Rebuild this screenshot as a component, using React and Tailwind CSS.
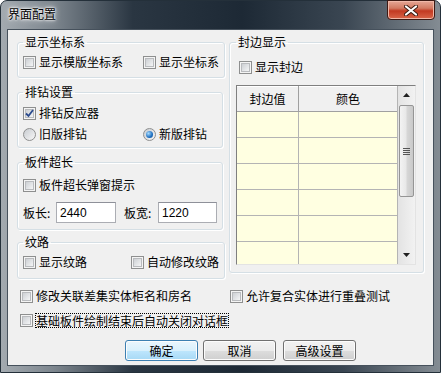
import React from 'react';

const Check = ({ checked }) => (
  <span className="w-[13px] h-[13px] shrink-0 border border-[#8e8f8f] bg-[#f4f4f4] p-px flex">
    <span className="flex-1 flex items-center justify-center bg-[linear-gradient(135deg,#cdd0d4,#f4f5f6)] border border-[#b9bbbe]">
      {checked && (
        <svg width="9" height="9" viewBox="0 0 9 9" className="-m-px">
          <path d="M1 4.5 L3.5 7 L8 1" fill="none" stroke="#2b4b8e" strokeWidth="1.8" />
        </svg>
      )}
    </span>
  </span>
);

const Radio = ({ checked }) => (
  <span className="w-[13px] h-[13px] shrink-0 rounded-full border border-[#8e8f8f] bg-[linear-gradient(135deg,#c8ccd1,#f7f7f7)] flex items-center justify-center">
    {checked && (
      <span className="w-[7px] h-[7px] rounded-full bg-[radial-gradient(circle_at_35%_35%,#a8dcff,#1e6fc0_60%,#0d4a90)]" />
    )}
  </span>
);

const Row = ({ children, className = '' }) => (
  <div className={`h-[14px] flex items-center gap-[3px] whitespace-nowrap ${className}`}>{children}</div>
);

const Group = ({ title, className = '', children }) => (
  <fieldset className={`border border-[#d5dfe5] rounded-[3px] shadow-[inset_1px_1px_0_#fff,1px_1px_0_#fff] ${className}`}>
    <legend className="px-[2px] leading-[14px]">{title}</legend>
    {children}
  </fieldset>
);

const Button = ({ children, primary }) => (
  <button
    className={`w-[73px] h-[21px] rounded-[3px] border leading-[17px] shadow-[inset_0_0_0_1px_#fcfcfc] ${
      primary
        ? 'border-[#3c7fb1] bg-[linear-gradient(#eaf6fd,#d9f0fc_50%,#bee6fd_51%,#a7d9f5)]'
        : 'border-[#707070] bg-[linear-gradient(#f2f2f2,#ebebeb_50%,#dddddd_51%,#cfcfcf)]'
    }`}
  >
    {children}
  </button>
);

const rows = [0, 1, 2, 3, 4, 5];

export default function App() {
  return (
    <div className="w-[441px] h-[373px] overflow-hidden bg-white font-['Noto_Sans_CJK_SC',sans-serif] text-[12px] text-black">
      <div className="w-full h-full rounded-t-[7px] border border-[#24303a] bg-[linear-gradient(90deg,#a3aab0_0%,#7d868e_12%,#2a3642_30%,#1d2935_55%,#3a4652_78%,#848c93_100%)] flex flex-col">
        {/* title bar */}
        <div className="h-[28px] flex items-start">
          <span className="ml-[7px] mt-[6px] leading-[14px] [text-shadow:0_0_6px_#fff,0_0_3px_#fff,0_0_2px_#fff]">界面配置</span>
          <div className="ml-auto mr-[5px] -mt-px w-[48px] h-[20px] rounded-b-[4px] border border-[#3d1a14] bg-[linear-gradient(#e6a796,#d27a62_40%,#c23a22_55%,#d9664a)] shadow-[inset_0_0_0_1px_#f0b8a8] flex items-center justify-center">
            <svg width="14" height="11" viewBox="0 0 14 11">
              <path d="M2 1.5 L12 9.5 M12 1.5 L2 9.5" stroke="#3a1a10" strokeWidth="4" strokeLinecap="round" />
              <path d="M2 1.5 L12 9.5 M12 1.5 L2 9.5" stroke="#ffffff" strokeWidth="2.2" strokeLinecap="round" />
            </svg>
          </div>
        </div>

        {/* client area */}
        <div className="ml-[6px] w-[427px] h-[337px] border border-[#46515c] bg-[#f0f0f0] pl-[9px] pt-[5px]">
          <div className="flex gap-[6px]">
            {/* left column */}
            <div className="w-[206px] flex flex-col">
              <Group title="显示坐标系" className="px-[5px] pt-[6px] pb-[8px]">
                <Row>
                  <Check />
                  <span className="w-[101px]">显示模版坐标系</span>
                  <Check />
                  <span>显示坐标系</span>
                </Row>
              </Group>

              <Group title="排钻设置" className="mt-[7px] px-[5px] pt-[7px] pb-[6px]">
                <Row>
                  <Check checked />
                  <span>排钻反应器</span>
                </Row>
                <Row className="mt-[7px]">
                  <Radio />
                  <span className="w-[101px]">旧版排钻</span>
                  <Radio checked />
                  <span>新版排钻</span>
                </Row>
              </Group>

              <Group title="板件超长" className="mt-[7px] px-[5px] pt-[9px] pb-[6px]">
                <Row>
                  <Check />
                  <span>板件超长弹窗提示</span>
                </Row>
                <div className="mt-[10px] h-[21px] flex items-center">
                  <span className="w-[33px]">板长:</span>
                  <div className="w-[60px] h-[21px] border border-[#abadb3] border-t-[#8e9099] bg-white pl-[3px] flex items-center font-['Liberation_Sans',sans-serif]">2440</div>
                  <span className="ml-[8px] w-[34px]">板宽:</span>
                  <div className="w-[59px] h-[21px] border border-[#abadb3] border-t-[#8e9099] bg-white pl-[3px] flex items-center font-['Liberation_Sans',sans-serif]">1220</div>
                </div>
              </Group>

              <Group title="纹路" className="mt-[5px] px-[5px] pt-[6px] pb-[9px]">
                <Row>
                  <Check />
                  <span className="w-[89px]">显示纹路</span>
                  <Check />
                  <span>自动修改纹路</span>
                </Row>
              </Group>
            </div>

            {/* right column */}
            <Group title="封边显示" className="w-[195px] h-[238px] px-[6px] pt-[11px]">
              <Row className="ml-[3px]">
                <Check />
                <span>显示封边</span>
              </Row>
              <div className="mt-[11px] w-[180px] h-[180px] border border-[#7f7f7f] border-r-[#e3e3e3] border-b-[#e3e3e3] flex overflow-hidden">
                <div className="w-[162px] bg-[#ffffe1] border-r border-[#b4b4b4]">
                  <div className="h-[26px] flex bg-[#f0f0f0] border-b border-[#a0a0a0] shadow-[inset_0_1px_0_#fff]">
                    <div className="w-[62px] border-r border-[#a0a0a0] flex items-center justify-center">封边值</div>
                    <div className="flex-1 flex items-center justify-center">颜色</div>
                  </div>
                  {rows.map((r) => (
                    <div key={r} className="h-[26px] flex border-b border-[#b4b4b4]">
                      <div className="w-[62px] border-r border-[#b4b4b4]" />
                      <div className="flex-1" />
                    </div>
                  ))}
                </div>
                <div className="w-[17px] bg-[linear-gradient(90deg,#e3e3e3,#f2f2f2)] flex flex-col items-center">
                  <div className="h-[18px] w-full flex items-center justify-center">
                    <svg width="7" height="4" viewBox="0 0 7 4"><path d="M0 4 L3.5 0 L7 4 Z" fill="#202020" /></svg>
                  </div>
                  <div className="mt-[1px] w-[15px] h-[92px] rounded-[2px] border border-[#959595] bg-[linear-gradient(90deg,#f3f3f3,#e8e8e8_45%,#d6d6d6_55%,#c9c9c9)] flex flex-col items-center justify-center gap-[1px]">
                    <span className="w-[7px] h-px bg-[#555]" />
                    <span className="w-[7px] h-px bg-[#555]" />
                    <span className="w-[7px] h-px bg-[#555]" />
                    <span className="w-[7px] h-px bg-[#555]" />
                  </div>
                  <div className="mt-auto h-[18px] w-full flex items-center justify-center">
                    <svg width="7" height="4" viewBox="0 0 7 4"><path d="M0 0 L7 0 L3.5 4 Z" fill="#202020" /></svg>
                  </div>
                </div>
              </div>
            </Group>
          </div>

          {/* bottom options */}
          <Row className="mt-[10px] ml-[3px]">
            <Check />
            <span className="w-[191px]">修改关联差集实体柜名和房名</span>
            <Check />
            <span>允许复合实体进行重叠测试</span>
          </Row>
          <div className="mt-[10px] ml-[3px] h-[15px] flex items-center gap-[2px] whitespace-nowrap">
            <Check />
            <span className="leading-[13px] border border-dotted border-black">基础板件绘制结束后自动关闭对话框</span>
          </div>

          <div className="mt-[12px] pl-[108px] flex">
            <Button primary>确定</Button>
            <span className="w-[5px]" />
            <Button>取消</Button>
            <span className="w-[7px]" />
            <Button>高级设置</Button>
          </div>
        </div>
      </div>
    </div>
  );
}
